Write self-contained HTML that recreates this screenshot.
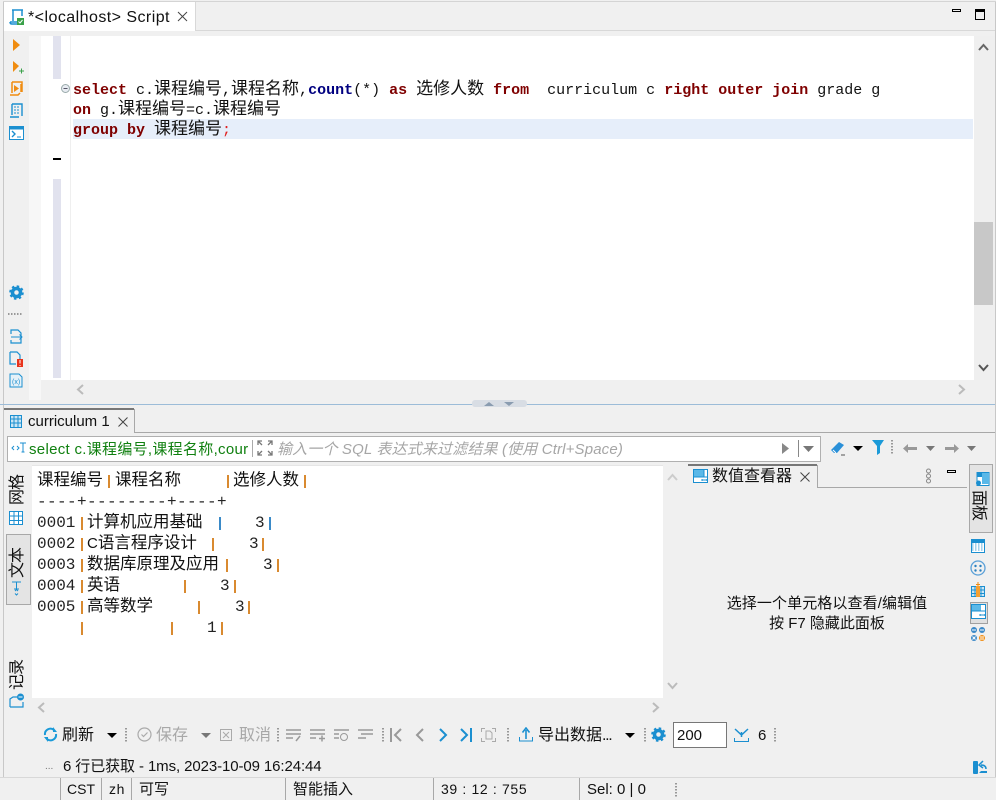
<!DOCTYPE html>
<html><head><meta charset="utf-8"><style>
html,body{margin:0;padding:0}
body{width:996px;height:800px;overflow:hidden;position:relative;background:#f0f0f0;font-family:"Liberation Sans","Noto Sans CJK SC",sans-serif;font-size:14px;color:#111}
.a,.t,.m,.r,svg{position:absolute}
.t{white-space:pre;line-height:20px}
.m{white-space:pre;font-family:"Liberation Mono","Noto Sans CJK SC",monospace;font-size:15px;line-height:20px;color:#111}
.m b{color:#7f0000}
.m i{font-style:normal;font-size:17px}
.r{white-space:pre;font-family:"Liberation Mono","Noto Sans CJK SC",monospace;font-size:16px;line-height:20px;color:#222}
.c{font-family:"Liberation Sans","Noto Sans CJK SC",sans-serif;font-size:16.5px;color:#111}
.p{position:absolute;width:1.5px;height:13px}
.o{background:#d98a30}.u{background:#3a8ac8}
.sp{position:absolute;width:2px;height:15px;background-image:linear-gradient(#999 50%,transparent 50%);background-size:2px 3px}
.v{position:absolute;background:#a8a8a8;width:1px}
.s{position:absolute;top:778px;height:22px;width:1px;background:#a8a8a8}
</style></head><body>
<!-- frame -->
<div class="a" style="left:3px;top:1px;width:1px;height:776px;background:#c8c8c8"></div>
<div class="a" style="left:995px;top:1px;width:1px;height:776px;background:#c8c8c8"></div>
<div class="a" style="left:3px;top:1px;width:993px;height:1px;background:#d4d4d4"></div>
<div class="a" style="left:4px;top:30px;width:991px;height:1px;background:#d8d8d8"></div>
<!-- top tab -->
<div class="a" style="left:4px;top:2px;width:191px;height:29px;background:#fff;border-right:1px solid #d8d8d8"></div>
<svg style="left:9px;top:9px" width="16" height="17" viewBox="0 0 16 17"><path d="M3 1h11M4 1v11M1 13h9M1 13c0 1.500 1 2 2 2h7M13 1v6" fill="none" stroke="#1b8fd0" stroke-width="1.500"/><rect x="8" y="9" width="7" height="7" fill="#3aa14a"/><path d="M9.500 12.500l1.500 1.500 2.500-3" stroke="#fff" fill="none"/></svg>
<div class="t" style="left:28px;top:8px;font-size:16px;letter-spacing:.45px">*&lt;localhost&gt; Script</div>
<svg style="left:177px;top:11px" width="11" height="11"><path d="M1 1l9 9M10 1l-9 9" stroke="#444" stroke-width="1"/></svg>
<div class="a" style="left:952px;top:9px;width:7px;height:1px;border:1.500px solid #000"></div>
<div class="a" style="left:975px;top:9px;width:8px;height:7px;border:1px solid #000;border-top:3px solid #000"></div>
<!-- left rail -->
<div class="a" style="left:4px;top:36px;width:25px;height:368px;background:#f0f0f0"></div>
<div class="a" style="left:29px;top:36px;width:12px;height:364px;background:#f7f7f7"></div>
<div class="a" style="left:41px;top:36px;width:30px;height:344px;background:#fff"></div>
<div class="a" style="left:53px;top:36px;width:8px;height:43px;background:#e1e2ee"></div>
<div class="a" style="left:53px;top:179px;width:8px;height:199px;background:#e1e2ee"></div>
<div class="a" style="left:53px;top:158px;width:8px;height:2px;background:#000"></div>
<div class="a" style="left:70px;top:36px;width:1px;height:344px;background:#efefef"></div>
<div class="a" style="left:71px;top:36px;width:903px;height:344px;background:#fff"></div>
<div class="a" style="left:73px;top:119px;width:900px;height:20px;background:#e6eefa"></div>
<!-- rail icons -->
<svg style="left:12px;top:38px" width="10" height="14"><path d="M1 1l7 6-7 6z" fill="#f08c10"/></svg>
<svg style="left:12px;top:60px" width="12" height="14"><path d="M1 1l6 5-6 6z" fill="#f08c10"/><path d="M7 11h5M9.500 8.500v5" stroke="#3aa14a"/></svg>
<svg style="left:9px;top:81px" width="15" height="16"><path d="M3 1h10v10M3 1v11M1 14h8l2-2" fill="none" stroke="#f08c10" stroke-width="1.500"/><path d="M5 4l5 3.500-5 3.500z" fill="#f08c10"/><path d="M12 3v8" stroke="#f08c10" stroke-width="1.500"/></svg>
<svg style="left:9px;top:103px" width="15" height="16"><path d="M3 1h10v12M3 1v11M1 14h9" fill="none" stroke="#1b8fd0" stroke-width="1.400"/><path d="M5 4h6M5 7h6M5 10h6" stroke="#1b8fd0" stroke-dasharray="2 1"/></svg>
<svg style="left:9px;top:126px" width="15" height="14"><rect x=".5" y=".5" width="14" height="13" fill="#fff" stroke="#1b8fd0"/><rect x="1" y="1" width="13" height="2.500" fill="#1b8fd0"/><path d="M3 5l3 3-3 3" fill="none" stroke="#1b8fd0" stroke-width="1.400"/><path d="M8 11h4" stroke="#1b8fd0"/></svg>
<svg style="left:9px;top:285px" width="15" height="15"><circle cx="7.500" cy="7.500" r="4" fill="none" stroke="#1b8fd0" stroke-width="3.500"/><circle cx="7.500" cy="7.500" r="6.300" fill="none" stroke="#1b8fd0" stroke-width="2" stroke-dasharray="2.500 2.450"/></svg>
<div class="a" style="left:8px;top:313px;width:15px;height:1.500px;background-image:linear-gradient(90deg,#999 50%,transparent 50%);background-size:3px 2px"></div>
<svg style="left:9px;top:329px" width="15" height="15"><path d="M2 5V1h7l3 3v10H2v-3" fill="none" stroke="#1b8fd0" stroke-width="1.200"/><path d="M2 8h11M10.500 5.500L13 8l-2.500 2.500" fill="none" stroke="#1b8fd0"/></svg>
<svg style="left:9px;top:351px" width="15" height="16"><path d="M1 1h7l3 3v7M1 1v12h6" fill="none" stroke="#1b8fd0" stroke-width="1.200"/><rect x="8" y="8" width="6" height="8" fill="#e8341c"/><path d="M11 9v3.500M11 14v1" stroke="#fff"/></svg>
<svg style="left:9px;top:373px" width="15" height="15"><path d="M1 1h9l3 3v10H1z" fill="#e6f1f8" stroke="#1b8fd0"/><text x="3" y="11" font-size="7" fill="#1b8fd0" font-family="Liberation Sans">(x)</text></svg>
<!-- editor -->
<svg style="left:61px;top:84px" width="9" height="9"><circle cx="4.500" cy="4.500" r="4" fill="#e8ecf2" stroke="#9aa"/><path d="M2.500 4.500h4" stroke="#556"/></svg>
<div class="m" style="left:73px;top:81px"><b style="font-weight:bold">select</b> c.<i>课程编号</i>,<i>课程名称</i>,<b style="color:#000080">count</b>(*) <b>as</b> <i>选修人数</i> <b>from</b>  curriculum c <b>right outer join</b> grade g</div>
<div class="m" style="left:73px;top:101px"><b>on</b> g.<i>课程编号</i>=c.<i>课程编号</i></div>
<div class="m" style="left:73px;top:121px"><b>group by</b> <i>课程编号</i><span style="color:#e02020">;</span></div>
<!-- editor scrollbars -->
<div class="a" style="left:974px;top:36px;width:21px;height:344px;background:#efefef"></div>
<div class="a" style="left:974px;top:222px;width:19px;height:83px;background:#c8c8c8"></div>
<svg style="left:978px;top:43px" width="11" height="8"><path d="M1 7l4.500-5L10 7" fill="none" stroke="#666" stroke-width="2"/></svg>
<svg style="left:978px;top:364px" width="11" height="8"><path d="M1 1l4.500 5L10 1" fill="none" stroke="#555" stroke-width="2"/></svg>
<svg style="left:76px;top:384px" width="8" height="11"><path d="M7 1L2 5.500 7 10" fill="none" stroke="#bbb" stroke-width="2"/></svg>
<svg style="left:958px;top:384px" width="8" height="11"><path d="M1 1l5 4.500L1 10" fill="none" stroke="#bbb" stroke-width="2"/></svg>
<!-- sash -->
<div class="a" style="left:0;top:404px;width:995px;height:1px;background:#9cbcd8"></div>
<div class="a" style="left:472px;top:400px;width:55px;height:7px;background:#d8dde4;border-radius:3px"></div>
<svg style="left:482px;top:401px" width="36" height="5"><path d="M2 5l5-4 5 4zM22 1h10l-5 4z" fill="#8a9cb0"/></svg>
<!-- results tab -->
<div class="a" style="left:4px;top:408px;width:130px;height:2px;background:#777"></div>
<div class="a" style="left:134px;top:409px;width:1px;height:23px;background:#a8a8a8"></div>
<div class="a" style="left:134px;top:432px;width:861px;height:1px;background:#a8a8a8"></div>
<svg style="left:10px;top:415px" width="12" height="13"><rect x=".5" y=".5" width="11" height="12" fill="#cbe6f5" stroke="#1b8fd0"/><path d="M4 0v13M8 0v13M0 4h12M0 8h12" stroke="#1b8fd0"/></svg>
<div class="t" style="left:28px;top:412px;font-size:15px">curriculum 1</div>
<svg style="left:118px;top:417px" width="10" height="10"><path d="M.500.500l9 9M9.500.500l-9 9" stroke="#444"/></svg>
<!-- filter -->
<div class="a" style="left:7px;top:436px;width:812px;height:24px;background:#fff;border:1px solid #b0b0b0"></div>
<svg style="left:11px;top:442px" width="15" height="12"><path d="M3 4L1 6l2 2M6 4l2 2-2 2" fill="none" stroke="#1b8fd0"/><path d="M9 1h6M12 1v9M10.500 10h3" stroke="#1b8fd0"/></svg>
<div class="t" style="left:29px;top:440px;font-size:15px;color:#108010;letter-spacing:.3px;width:220px;overflow:hidden">select c.课程编号,课程名称,cour</div>
<div class="a" style="left:252px;top:440px;width:1px;height:17px;background:#aaa"></div>
<svg style="left:257px;top:440px" width="16" height="16"><path d="M1 5V1h4M15 5V1h-4M1 11v4h4M15 11v4h-4M1 1l4 4M15 1l-4 4M1 15l4-4M15 15l-4-4" fill="none" stroke="#777" stroke-width="1.300"/></svg>
<div class="t" style="left:277px;top:440px;font-size:15px;font-style:italic;color:#a6a6a6;letter-spacing:.15px">输入一个 SQL 表达式来过滤结果 (使用 Ctrl+Space)</div>
<svg style="left:780px;top:441px" width="10" height="15"><path d="M2 2l7 5.500L2 13z" fill="#888"/></svg>
<div class="a" style="left:798px;top:440px;width:1px;height:17px;background:#888"></div>
<svg style="left:802px;top:445px" width="14" height="8"><path d="M1 1h11L6.500 7z" fill="#777"/></svg>
<svg style="left:830px;top:440px" width="16" height="16"><path d="M1 10l8-8 5 3-7 8H4z" fill="#2a90d8"/><path d="M3 10l3 3" stroke="#fff"/><path d="M11 15h4" stroke="#555"/></svg>
<svg style="left:853px;top:445px" width="10" height="7"><path d="M0 1h10L5 6z" fill="#000"/></svg>
<svg style="left:871px;top:439px" width="14" height="16"><path d="M1 1h12L9 7v7l-3 2V7z" fill="#1b9ad8"/></svg>
<div class="sp" style="left:891px;top:440px"></div>
<svg style="left:902px;top:443px" width="16" height="11"><path d="M1 5.500L6 1v3h9v3H6v3z" fill="#999"/></svg>
<svg style="left:925px;top:445px" width="11" height="7"><path d="M1 1h9L5.500 6z" fill="#777"/></svg>
<svg style="left:944px;top:443px" width="16" height="11"><path d="M15 5.500L10 1v3H1v3h9v3z" fill="#999"/></svg>
<svg style="left:966px;top:445px" width="11" height="7"><path d="M1 1h9L5.500 6z" fill="#777"/></svg>
<!-- left tabs -->
<div class="t" style="left:4px;top:481px;width:28px;height:20px;font-size:16px;line-height:20px;transform:rotate(-90deg);text-align:center;letter-spacing:-1px">网格</div>
<svg style="left:9px;top:511px" width="14" height="14"><rect x=".5" y=".5" width="13" height="13" fill="#fff" stroke="#1b8fd0"/><path d="M5 0v14M9.500 0v14M0 5h14M0 9.500h14" stroke="#1b8fd0"/></svg>
<div class="a" style="left:6px;top:534px;width:23px;height:69px;background:#e4e4e4;border:1px solid #a8a8a8"></div>
<div class="t" style="left:4px;top:554px;width:28px;height:20px;font-size:16px;line-height:20px;transform:rotate(-90deg);text-align:center;letter-spacing:-1px">文本</div>
<svg style="left:11px;top:581px" width="11" height="15"><path d="M1 1h9M5.500 1v7M3 8h5" stroke="#1b8fd0" fill="none"/><path d="M4 10l1.500-1.500L7 10M4 12.500L5.500 14 7 12.500" stroke="#1b8fd0" fill="none"/></svg>
<div class="t" style="left:4px;top:666px;width:28px;height:20px;font-size:16px;line-height:20px;transform:rotate(-90deg);text-align:center;letter-spacing:-1px">记录</div>
<svg style="left:9px;top:693px" width="16" height="15"><path d="M1 14V6l3-2h6M14 9v5H1" fill="none" stroke="#1b8fd0" stroke-width="1.200"/><circle cx="11.500" cy="4" r="3.500" fill="#1b8fd0"/><path d="M9.500 4h4" stroke="#fff"/></svg>
<!-- result text -->
<div class="a" style="left:32px;top:465px;width:631px;height:233px;background:#fff"></div>
<div class="a" style="left:32px;top:465px;width:631px;height:1px;background:#e6e6e6"></div>
<svg style="left:667px;top:473px" width="11" height="8"><path d="M1 7l4.500-5L10 7" fill="none" stroke="#ccc" stroke-width="2"/></svg>
<svg style="left:667px;top:682px" width="11" height="8"><path d="M1 1l4.500 5L10 1" fill="none" stroke="#bbb" stroke-width="2"/></svg>
<svg style="left:37px;top:702px" width="8" height="11"><path d="M7 1L2 5.500 7 10" fill="none" stroke="#bbb" stroke-width="2"/></svg>
<svg style="left:652px;top:702px" width="8" height="11"><path d="M1 1l5 4.500L1 10" fill="none" stroke="#bbb" stroke-width="2"/></svg>

<div class="r c" style="left:37px;top:470px">课程编号</div><div class="p o" style="left:108px;top:475px"></div>
<div class="r c" style="left:115px;top:470px">课程名称</div><div class="p o" style="left:227px;top:475px"></div>
<div class="r c" style="left:233px;top:470px">选修人数</div><div class="p o" style="left:304px;top:475px"></div>
<div class="r" style="left:37px;top:492px;letter-spacing:.4px">----+--------+----+</div>

<div class="r" style="left:37px;top:513px">0001</div><div class="p o" style="left:81px;top:517px"></div><div class="r c" style="left:87px;top:512px">计算机应用基础</div><div class="p u" style="left:219px;top:517px"></div><div class="r" style="left:255px;top:513px">3</div><div class="p u" style="left:269px;top:517px"></div>
<div class="r" style="left:37px;top:534px">0002</div><div class="p o" style="left:81px;top:538px"></div><div class="r c" style="left:87px;top:533px"><span style="font-size:15px">C</span>语言程序设计</div><div class="p o" style="left:212px;top:538px"></div><div class="r" style="left:249px;top:534px">3</div><div class="p o" style="left:262px;top:538px"></div>
<div class="r" style="left:37px;top:555px">0003</div><div class="p o" style="left:81px;top:559px"></div><div class="r c" style="left:87px;top:554px">数据库原理及应用</div><div class="p o" style="left:226px;top:559px"></div><div class="r" style="left:263px;top:555px">3</div><div class="p o" style="left:277px;top:559px"></div>
<div class="r" style="left:37px;top:576px">0004</div><div class="p o" style="left:81px;top:580px"></div><div class="r c" style="left:87px;top:575px">英语</div><div class="p o" style="left:184px;top:580px"></div><div class="r" style="left:220px;top:576px">3</div><div class="p o" style="left:234px;top:580px"></div>
<div class="r" style="left:37px;top:597px">0005</div><div class="p o" style="left:81px;top:601px"></div><div class="r c" style="left:87px;top:596px">高等数学</div><div class="p o" style="left:198px;top:601px"></div><div class="r" style="left:235px;top:597px">3</div><div class="p o" style="left:248px;top:601px"></div>
<div class="p o" style="left:81px;top:622px"></div><div class="p o" style="left:171px;top:622px"></div><div class="r" style="left:207px;top:618px">1</div><div class="p o" style="left:221px;top:622px"></div>

<!-- value panel -->
<div class="a" style="left:688px;top:464px;width:129px;height:2px;background:#777"></div>
<div class="a" style="left:817px;top:465px;width:1px;height:22px;background:#a8a8a8"></div>
<div class="a" style="left:817px;top:487px;width:150px;height:1px;background:#a8a8a8"></div>
<svg style="left:693px;top:469px" width="15" height="15"><rect x=".5" y=".5" width="14" height="13" fill="#fff" stroke="#1b8fd0"/><rect x="1" y="1" width="10" height="7" fill="#5ab8e8"/><path d="M1 8h14M11 1v7" stroke="#1b8fd0"/><path d="M9 11h5M9 10v2M14 10v2" stroke="#1b8fd0"/></svg>
<div class="t" style="left:712px;top:467px;font-size:16px">数值查看器</div>
<svg style="left:800px;top:472px" width="10" height="10"><path d="M.500.500l9 9M9.500.500l-9 9" stroke="#444"/></svg>
<svg style="left:925px;top:468px" width="7" height="16"><circle cx="3.500" cy="3" r="2" fill="none" stroke="#888"/><circle cx="3.500" cy="8" r="2" fill="none" stroke="#888"/><circle cx="3.500" cy="13" r="2" fill="none" stroke="#888"/></svg>
<div class="a" style="left:947px;top:470px;width:7px;height:1px;border:1.500px solid #000"></div>
<div class="a" style="left:969px;top:464px;width:22px;height:67px;background:#e4e4e4;border:1px solid #a8a8a8"></div>
<svg style="left:975px;top:472px" width="15" height="15"><rect x="2" y=".5" width="12" height="13" fill="#fff" stroke="#1b8fd0"/><rect x="7" y="1" width="7" height="11" fill="#5ab8e8"/><rect x="2" y="1" width="5" height="4" fill="#1b8fd0"/><circle cx="3.500" cy="11" r="2.500" fill="#1b8fd0"/></svg>
<div class="t" style="left:965px;top:495px;width:30px;height:20px;font-size:16px;line-height:20px;transform:rotate(90deg);text-align:center;letter-spacing:-1px;margin-left:-2px">面板</div>
<svg style="left:971px;top:539px" width="14" height="14"><rect x=".5" y=".5" width="13" height="13" fill="#fff" stroke="#1b8fd0"/><rect x="1" y="1" width="12" height="3" fill="#1b8fd0"/><path d="M1 5h12M1 7h12M1 9h12M1 11h12" stroke="#1b8fd0" stroke-width="1" stroke-dasharray="1.500 1.500" opacity=".8"/></svg>
<svg style="left:970px;top:560px" width="16" height="16"><circle cx="8" cy="8" r="7" fill="none" stroke="#5aa0d8" stroke-width="1.300"/><circle cx="5.500" cy="6" r="1.200" fill="#2a80c0"/><circle cx="10.500" cy="6" r="1.200" fill="#2a80c0"/><circle cx="5.500" cy="10.500" r="1.200" fill="#2a80c0"/><circle cx="10.500" cy="10.500" r="1.200" fill="#2a80c0"/></svg>
<svg style="left:971px;top:582px" width="14" height="16"><rect x=".5" y="4.500" width="13" height="10" fill="#cbe6f5" stroke="#1b8fd0"/><path d="M4 4v11M10 4v11M0 8h14M0 11.500h14" stroke="#1b8fd0"/><rect x="5" y="4" width="4" height="11" fill="#f6a030"/><path d="M7 0v4M5 2.500h4" stroke="#f08c10"/></svg>
<div class="a" style="left:970px;top:602px;width:16px;height:20px;background:#e0e0e0;border:1px solid #a0a0a0"></div>
<svg style="left:971px;top:604px" width="15" height="16"><rect x=".5" y=".5" width="14" height="14" fill="#fff" stroke="#1b8fd0"/><rect x="1" y="1" width="9" height="6" fill="#5ab8e8"/><path d="M1 7h14" stroke="#1b8fd0"/><path d="M9 11h5M9 10v2M14 10v2" stroke="#1b8fd0"/></svg>
<svg style="left:970px;top:626px" width="16" height="16"><circle cx="4" cy="4" r="3" fill="#3a88c8"/><path d="M2 4h4" stroke="#fff"/><circle cx="12" cy="4" r="3" fill="#3a88c8"/><path d="M10 4h4" stroke="#fff"/><circle cx="4" cy="12" r="3" fill="#3a88c8"/><path d="M2.500 10.500l3 3M5.500 10.500l-3 3" stroke="#fff"/><circle cx="12" cy="12" r="3" fill="#f08c10"/><path d="M10 11h4M10 13h4" stroke="#fff"/></svg>
<div class="t" style="left:663px;top:594px;width:328px;text-align:center;font-size:15px;letter-spacing:.1px">选择一个单元格以查看/编辑值</div>
<div class="t" style="left:663px;top:614px;width:328px;text-align:center;font-size:15px">按 F7 隐藏此面板</div>
<!-- toolbar -->
<svg style="left:43px;top:727px" width="15" height="15"><path d="M2 8a5.500 5.500 0 0 1 9-5M13 7a5.500 5.500 0 0 1-9 5" fill="none" stroke="#1b9ad8" stroke-width="2"/><path d="M10 0v5h4zM5 15v-5H1z" fill="#1b9ad8"/></svg>
<div class="t" style="left:62px;top:726px;font-size:16px">刷新</div>
<svg style="left:107px;top:732px" width="10" height="7"><path d="M0 1h10L5 6z" fill="#000"/></svg>
<div class="sp" style="left:125px;top:728px"></div>
<svg style="left:137px;top:727px" width="15" height="15"><circle cx="7.500" cy="7.500" r="6.500" fill="none" stroke="#aaa" stroke-width="1.200"/><path d="M4.500 7.500l2 2 4-4" fill="none" stroke="#aaa" stroke-width="1.200"/></svg>
<div class="t" style="left:156px;top:726px;font-size:16px;color:#a8a8a8">保存</div>
<svg style="left:201px;top:732px" width="10" height="7"><path d="M0 1h10L5 6z" fill="#777"/></svg>
<svg style="left:220px;top:729px" width="12" height="12"><rect x=".5" y=".5" width="11" height="11" fill="none" stroke="#aaa"/><path d="M3 3l6 6M9 3l-6 6" stroke="#aaa"/></svg>
<div class="t" style="left:239px;top:726px;font-size:16px;color:#a8a8a8">取消</div>
<div class="sp" style="left:277px;top:728px"></div>
<svg style="left:286px;top:729px" width="15" height="13"><path d="M0 1h15M0 5h15M0 9h7" stroke="#999" stroke-width="1.500"/><path d="M14 7l-4 5" stroke="#999" stroke-width="1.500"/></svg>
<svg style="left:310px;top:729px" width="15" height="13"><path d="M0 1h15M0 5h15M0 9h6" stroke="#999" stroke-width="1.500"/><path d="M9 9.500h6M12 6.500v6" stroke="#999" stroke-width="1.500"/></svg>
<svg style="left:334px;top:729px" width="15" height="13"><path d="M0 1h15M0 5h5M0 9h5" stroke="#999" stroke-width="1.500"/><circle cx="10" cy="8" r="3.500" fill="none" stroke="#999"/></svg>
<svg style="left:358px;top:729px" width="15" height="13"><path d="M0 1h15M3 5h12M0 9h8" stroke="#999" stroke-width="1.500"/></svg>
<div class="sp" style="left:382px;top:728px"></div>
<svg style="left:390px;top:728px" width="12" height="14"><path d="M1 0v14" stroke="#999" stroke-width="2"/><path d="M11 1L5 7l6 6" fill="none" stroke="#999" stroke-width="2"/></svg>
<svg style="left:415px;top:728px" width="9" height="14"><path d="M8 1L2 7l6 6" fill="none" stroke="#999" stroke-width="2"/></svg>
<svg style="left:439px;top:728px" width="9" height="14"><path d="M1 1l6 6-6 6" fill="none" stroke="#1b8fd0" stroke-width="2"/></svg>
<svg style="left:460px;top:728px" width="12" height="14"><path d="M1 1l6 6-6 6" fill="none" stroke="#1b8fd0" stroke-width="2"/><path d="M11 0v14" stroke="#1b8fd0" stroke-width="2"/></svg>
<svg style="left:481px;top:728px" width="15" height="14"><path d="M4 .500H.500V4M11 .500h3.500V4M.500 10v3.500H4M14.500 10v3.500H11" fill="none" stroke="#aaa"/><path d="M5 3h4l2 2v6H5z" fill="none" stroke="#aaa"/></svg>
<div class="sp" style="left:507px;top:728px"></div>
<svg style="left:519px;top:727px" width="14" height="15"><path d="M7 12V3M3.500 5.500L7 1l3.500 4.500" fill="none" stroke="#1b8fd0" stroke-width="1.600"/><path d="M.500 10v4h13v-4" fill="none" stroke="#1b8fd0"/></svg>
<div class="t" style="left:538px;top:726px;font-size:16px">导出数据<span style="letter-spacing:-1.300px">...</span></div>
<svg style="left:625px;top:732px" width="10" height="7"><path d="M0 1h10L5 6z" fill="#000"/></svg>
<div class="sp" style="left:644px;top:728px"></div>
<svg style="left:651px;top:727px" width="15" height="15"><circle cx="7.500" cy="7.500" r="4" fill="none" stroke="#1b8fd0" stroke-width="3.500"/><circle cx="7.500" cy="7.500" r="6.300" fill="none" stroke="#1b8fd0" stroke-width="2" stroke-dasharray="2.500 2.450"/></svg>
<div class="a" style="left:673px;top:722px;width:52px;height:24px;background:#fff;border:1px solid #777"></div>
<div class="t" style="left:677px;top:726px;font-size:15px">200</div>
<svg style="left:734px;top:728px" width="15" height="15"><path d="M1 1l6.500 6L14 1M7.500 4v5" fill="none" stroke="#1b8fd0" stroke-width="1.500"/><path d="M.500 10v3.500h14V10" fill="none" stroke="#1b8fd0"/></svg>
<div class="t" style="left:758px;top:726px;font-size:15px">6</div>
<div class="sp" style="left:774px;top:728px"></div>
<!-- status -->
<div class="t" style="left:45px;top:757px;font-size:10px;color:#777">...</div>
<div class="t" style="left:63px;top:757px;font-size:15px;letter-spacing:-.1px">6 行已获取 - 1ms, 2023-10-09 16:24:44</div>
<svg style="left:973px;top:760px" width="15" height="15"><rect x="0" y="1" width="5" height="13" rx="1" fill="#1b8fd0"/><path d="M6 13h8v-2H8z" fill="#1b8fd0"/><path d="M13 9c0-3-2-4-5-4M10 1L6 5l4 3" fill="none" stroke="#1b8fd0" stroke-width="1.500"/></svg>
<div class="a" style="left:0;top:777px;width:996px;height:1px;background:#d8d8d8"></div>
<div class="s" style="left:60px"></div><div class="s" style="left:101px"></div><div class="s" style="left:131px"></div><div class="s" style="left:285px"></div><div class="s" style="left:433px"></div><div class="s" style="left:579px"></div>
<div class="t" style="left:67px;top:779px;font-size:14px">CST</div>
<div class="t" style="left:109px;top:779px;font-size:14px;letter-spacing:.6px">zh</div>
<div class="t" style="left:139px;top:780px;font-size:15px">可写</div>
<div class="t" style="left:293px;top:780px;font-size:15px">智能插入</div>
<div class="t" style="left:441px;top:779px;font-size:14px;letter-spacing:.65px">39 : 12 : 755</div>
<div class="t" style="left:587px;top:780px;font-size:15px">Sel: 0 | 0</div>
<div class="sp" style="left:675px;top:783px"></div>
</body></html>
